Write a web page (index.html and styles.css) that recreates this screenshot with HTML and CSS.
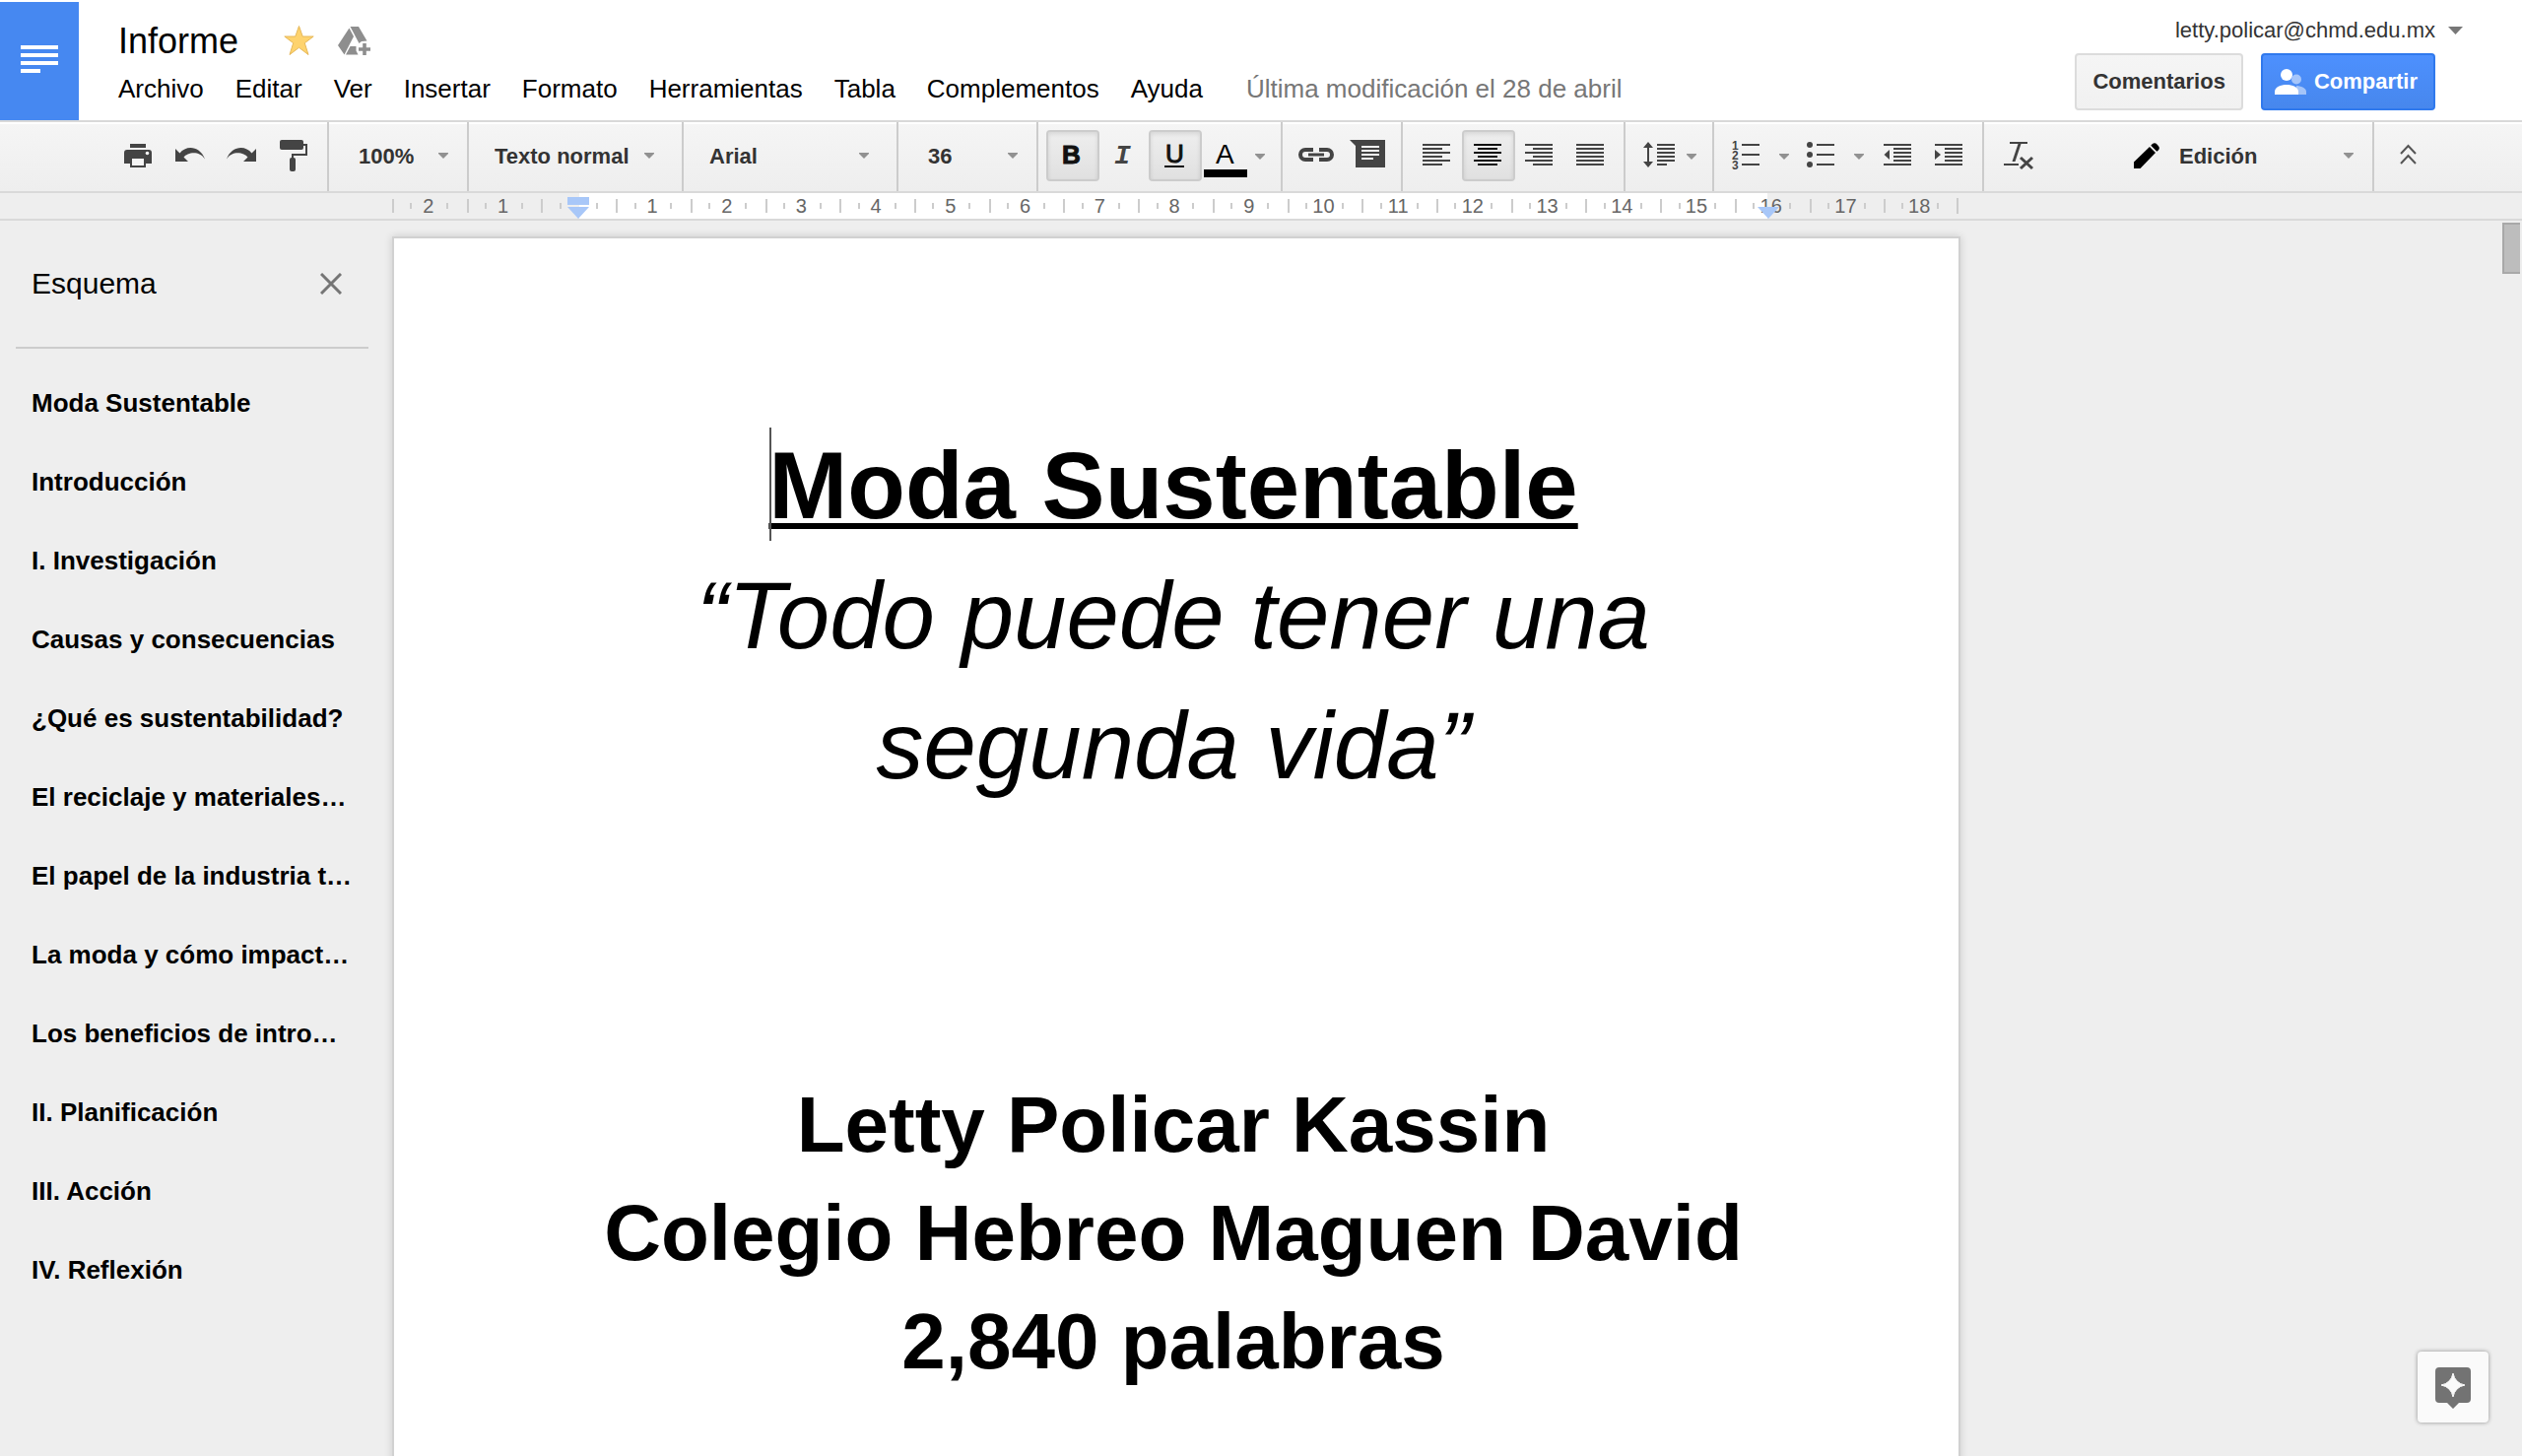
FILE: index.html
```html
<!DOCTYPE html>
<html lang="es">
<head>
<meta charset="utf-8">
<title>Informe - Documentos</title>
<link rel="stylesheet" href="styles.css">
</head>
<body>
<div class="app">
  <header class="header">
    <a class="logo" href="#" aria-label="Página principal de Documentos">
      <svg width="38" height="28" viewBox="0 0 38 28" fill="#fff"><path d="M0 0h38v4H0zM0 8h38v4H0zM0 16h38v4H0zM0 24h20v4H0z"/></svg>
    </a>
    <div class="header-main">
      <div class="title-row">
        <input class="doc-title" type="text" value="Informe" aria-label="Nombre del documento">
        <button class="icon-button" aria-label="Destacar">
          <svg width="31" height="32" viewBox="0 0 31 32"><path d="M15.500 1.500 19.200 12H30.200L21.300 18.700 25 30.500 15.500 23.300 6 30.500 9.700 18.700.8 12H11.800Z" fill="#fed36e" stroke="#e6b85a" stroke-width="1"/></svg>
        </button>
        <button class="icon-button" aria-label="Agregar a Mi unidad">
          <svg width="33" height="29" viewBox="0 0 33 29" fill="#8e8e8e"><path d="M11.500 1.500 16 10 6.500 28.500 0 19Z"/><path d="M12.500 0H21L29.500 14.500 24 15 21.500 17Z"/><path d="M12.500 20H18.500V24.500L20.500 28.500H8Z"/><path d="M25.200 17h3.600v4.200H33v3.600h-4.200V29h-3.600v-4.200H21v-3.600h4.200z"/></svg>
        </button>
      </div>
      <nav class="menu" aria-label="Menú">
        <button>Archivo</button>
        <button>Editar</button>
        <button>Ver</button>
        <button>Insertar</button>
        <button>Formato</button>
        <button>Herramientas</button>
        <button>Tabla</button>
        <button>Complementos</button>
        <button>Ayuda</button>
        <a class="last-edit" href="#">Última modificación el 28 de abril</a>
      </nav>
    </div>
    <div class="header-side">
      <button class="account">letty.policar@chmd.edu.mx
        <svg width="15" height="8" viewBox="0 0 15 8" fill="#777"><path d="M0 0H15L7.500 8Z"/></svg>
      </button>
      <div class="actions">
        <button class="button">Comentarios</button>
        <button class="button button-primary">
          <svg width="32" height="26" viewBox="0 0 32 26" fill="#fff"><g opacity=".5"><circle cx="22" cy="10.500" r="5"/><path d="M22 17C28 17.500 32 20 32 23V26H22Z"/></g><circle cx="12" cy="6" r="6"/><path d="M0 26V23C0 18.500 6 16 12 16S24 18.500 24 23V26Z"/></svg>
          Compartir
        </button>
      </div>
    </div>
  </header>

  <div class="toolbar" role="toolbar">
    <div class="group group-first">
      <button class="tool" aria-label="Imprimir"><svg viewBox="0 0 50 48"><path d="M18 12H34V16H18ZM15 18H37Q40 18 40 21V32H12V21Q12 18 15 18Z"/><path d="M18 26H34V36H18Z"/><path d="M20 27H32V34H20Z" fill="#f5f5f5"/><circle cx="35.500" cy="21.500" r="1.800" fill="#f5f5f5"/></svg></button>
      <button class="tool" aria-label="Deshacer"><svg viewBox="0 0 50 48"><path d="M12 17V30H25L20.500 25.500C24 21 36 18 42 27.500C37 14 23 13 16.500 21.500Z"/></svg></button>
      <button class="tool" aria-label="Rehacer"><svg viewBox="0 0 50 48"><path d="M42 17V30H29L33.500 25.500C30 21 18 18 12 27.500C17 14 31 13 37.500 21.500Z"/></svg></button>
      <button class="tool" aria-label="Copiar formato"><svg viewBox="0 0 50 48"><rect x="14" y="8" width="24" height="10" rx="2"/><path d="M38 13H41V23H27V28" fill="none" stroke="#444" stroke-width="2"/><rect x="24" y="26" width="6" height="14" rx="2"/></svg></button>
    </div>
    <label class="group picker picker-short" aria-label="Zoom">
      <select><option>100%</option></select>
      <svg class="arrow" viewBox="0 0 10 6"><path d="M0 0H10V1L5 6L0 1Z"/></svg>
    </label>
    <label class="group picker picker-long" aria-label="Estilos">
      <select><option>Texto normal</option></select>
      <svg class="arrow" viewBox="0 0 10 6"><path d="M0 0H10V1L5 6L0 1Z"/></svg>
    </label>
    <label class="group picker picker-long" aria-label="Fuente">
      <select><option>Arial</option></select>
      <svg class="arrow" viewBox="0 0 10 6"><path d="M0 0H10V1L5 6L0 1Z"/></svg>
    </label>
    <label class="group picker picker-short" aria-label="Tamaño de fuente">
      <select><option>36</option></select>
      <svg class="arrow" viewBox="0 0 10 6"><path d="M0 0H10V1L5 6L0 1Z"/></svg>
    </label>
    <div class="group group-text">
      <button class="tool pressed" aria-label="Negrita" aria-pressed="true"><svg viewBox="0 0 50 48"><text class="glyph glyph-bold" x="14" y="32">B</text></svg></button>
      <button class="tool" aria-label="Cursiva"><svg viewBox="0 0 50 48"><text class="glyph glyph-italic" x="15" y="32">I</text></svg></button>
      <button class="tool pressed" aria-label="Subrayado" aria-pressed="true"><svg viewBox="0 0 50 48"><text class="glyph glyph-underline" x="15" y="31">U</text><path d="M14 34H34V36H14Z"/></svg></button>
      <button class="tool tool-color" aria-label="Color del texto"><svg viewBox="0 0 78 48"><text class="glyph glyph-color" x="14" y="32">A</text><path d="M2 38H46V46H2Z" fill="#000"/><path class="drop" d="M54 22H64V23L59 28L54 23Z"/></svg></button>
    </div>
    <div class="group">
      <button class="tool" aria-label="Insertar enlace"><svg viewBox="0 0 50 48"><path d="M21 18H13A5 5 0 0 0 13 28H21M27 18H35A5 5 0 0 1 35 28H27" fill="none" stroke="#444" stroke-width="4"/><path d="M16 21.500H32V24.500H16Z"/></svg></button>
      <button class="tool" aria-label="Agregar comentario"><svg viewBox="0 0 50 48"><path d="M6 8H42V36H12V14Z"/><path d="M18 14H36V16H18ZM18 18H36V20H18ZM18 22H36V24H18ZM18 26H30V28H18Z" fill="#f3f3f3"/></svg></button>
    </div>
    <div class="group">
      <button class="tool" aria-label="Alinear a la izquierda"><svg viewBox="0 0 50 48"><path d="M10 12h28v2H10zM10 16h20v2H10zM10 20h28v2H10zM10 24h20v2H10zM10 28h28v2H10zM10 32h20v2H10z"/></svg></button>
      <button class="tool pressed" aria-label="Centrar" aria-pressed="true"><svg viewBox="0 0 50 48"><path d="M10 12h28v2H10zM14 16h20v2H14zM10 20h28v2H10zM14 24h20v2H14zM10 28h28v2H10zM14 32h20v2H14z"/></svg></button>
      <button class="tool" aria-label="Alinear a la derecha"><svg viewBox="0 0 50 48"><path d="M10 12h28v2H10zM18 16h20v2H18zM10 20h28v2H10zM18 24h20v2H18zM10 28h28v2H10zM18 32h20v2H18z"/></svg></button>
      <button class="tool" aria-label="Justificar"><svg viewBox="0 0 50 48"><path d="M10 12h28v2H10zM10 16h28v2H10zM10 20h28v2H10zM10 24h28v2H10zM10 28h28v2H10zM10 32h28v2H10z"/></svg></button>
    </div>
    <div class="group">
      <button class="tool tool-spacing" aria-label="Interlineado"><svg viewBox="0 0 70 48"><path d="M13 10L18 16H14V30H18L13 36L8 30H12V16H8Z"/><path d="M22 12h18v2H22zM22 16h18v2H22zM22 20h18v2H22zM22 24h18v2H22zM22 28h18v2H22zM22 32h10v2H22z"/><path class="drop" d="M52 22H62V23L57 28L52 23Z"/></svg></button>
    </div>
    <div class="group">
      <button class="tool tool-list" aria-label="Lista numerada"><svg viewBox="0 0 74 48"><text class="digit" x="8" y="18">1</text><text class="digit" x="8" y="28">2</text><text class="digit" x="8" y="38">3</text><path d="M18 12h18v2H18zM18 22h18v2H18zM18 32h18v2H18z"/><path class="drop" d="M56 22H66V23L61 28L56 23Z"/></svg></button>
      <button class="tool tool-list" aria-label="Lista con viñetas"><svg viewBox="0 0 74 48"><circle cx="11" cy="13" r="3"/><circle cx="11" cy="23" r="3"/><circle cx="11" cy="33" r="3"/><path d="M18 12h18v2H18zM18 22h18v2H18zM18 32h18v2H18z"/><path class="drop" d="M56 22H66V23L61 28L56 23Z"/></svg></button>
      <button class="tool" aria-label="Reducir sangría"><svg viewBox="0 0 50 48"><path d="M10 12h28v2H10zM20 16h18v2H20zM20 20h18v2H20zM20 24h18v2H20zM20 28h18v2H20zM10 32h28v2H10z"/><path d="M16 18V28L10.500 23Z"/></svg></button>
      <button class="tool" aria-label="Aumentar sangría"><svg viewBox="0 0 50 48"><path d="M10 12h28v2H10zM20 16h18v2H20zM20 20h18v2H20zM20 24h18v2H20zM20 28h18v2H20zM10 32h28v2H10z"/><path d="M10 18V28L16 23Z"/></svg></button>
    </div>
    <div class="group group-open">
      <button class="tool" aria-label="Borrar formato"><svg viewBox="0 0 50 48"><path d="M16 10H34V12H27.500L21.500 30H18.500L24.500 12H16ZM10 32H25V34H10Z"/><path d="M27 26L39 37M39 26L27 37" stroke="#444" stroke-width="3"/></svg></button>
    </div>
    <label class="group picker picker-mode" aria-label="Modo">
      <svg class="pencil" viewBox="0 0 26 26"><path d="M0 19.500 16 4 22 10 6.500 26H0Z"/><path d="M17.300 2.800C19-.3 21.800-.5 23.500 1.500L25 3.300C26.500 5 26 7 23.300 8.800Z"/></svg>
      <select><option>Edición</option></select>
      <svg class="arrow" viewBox="0 0 10 6"><path d="M0 0H10V1L5 6L0 1Z"/></svg>
    </label>
    <div class="group group-last">
      <button class="tool" aria-label="Ocultar los menús"><svg viewBox="0 0 50 48"><path d="M17 22 24.500 14 32 22M17 32 24.500 24 32 32" fill="none" stroke="#555" stroke-width="2"/></svg></button>
    </div>
  </div>

  <div class="ruler">
    <div class="ruler-scale">
      <span>2</span><span>1</span><span></span><span>1</span><span>2</span><span>3</span><span>4</span><span>5</span><span>6</span><span>7</span><span>8</span><span>9</span><span>10</span><span>11</span><span>12</span><span>13</span><span>14</span><span>15</span><span>16</span><span>17</span><span>18</span>
      <svg class="marker marker-left" viewBox="0 0 22 22"><path d="M0 0H22V8H0ZM0 10H22L11 22Z"/></svg>
      <svg class="marker marker-right" viewBox="0 0 22 22"><path d="M0 10H22L11 22Z"/></svg>
    </div>
  </div>

  <main class="workspace">
    <aside class="outline">
      <div class="outline-head">
        <h2>Esquema</h2>
        <button class="icon-button" aria-label="Cerrar esquema"><svg width="22" height="22" viewBox="0 0 22 22"><path d="M1 1 21 21M21 1 1 21" stroke="#757575" stroke-width="3"/></svg></button>
      </div>
      <ul>
        <li><a href="#moda">Moda Sustentable</a></li>
        <li><a href="#">Introducción</a></li>
        <li><a href="#">I. Investigación</a></li>
        <li><a href="#">Causas y consecuencias</a></li>
        <li><a href="#">¿Qué es sustentabilidad?</a></li>
        <li><a href="#">El reciclaje y materiales…</a></li>
        <li><a href="#">El papel de la industria t…</a></li>
        <li><a href="#">La moda y cómo impact…</a></li>
        <li><a href="#">Los beneficios de intro…</a></li>
        <li><a href="#">II. Planificación</a></li>
        <li><a href="#">III. Acción</a></li>
        <li><a href="#">IV. Reflexión</a></li>
      </ul>
    </aside>
    <article class="page">
      <h1 id="moda"><span class="underlined">Moda Sustentable<i class="caret"></i></span></h1>
      <p class="subtitle">“Todo puede tener una segunda vida”</p>
      <div class="credits">
        <p>Letty Policar Kassin</p>
        <p>Colegio Hebreo Maguen David</p>
        <p>2,840 palabras</p>
      </div>
    </article>
    <div class="scroll-thumb"></div>
    <button class="explore" aria-label="Explorar">
      <svg width="36" height="42" viewBox="0 0 36 42"><path d="M4 0H32Q36 0 36 4V32Q36 36 32 36H24L18 42L12 36H4Q0 36 0 32V4Q0 0 4 0Z" fill="#737373"/><path d="M18 6Q20 16 30 18Q20 20 18 30Q16 20 6 18Q16 16 18 6Z" fill="#fafafa" stroke="#fafafa"/></svg>
    </button>
  </main>
</div>
</body>
</html>
```
FILE: styles.css
```css
* {
  box-sizing: border-box;
}

body {
  margin: 0;
  background: #eee;
  color: #000;
  font-family: "Liberation Sans", Arial, sans-serif;
}

h1, h2, p, ul {
  margin: 0;
  padding: 0;
}

button, select, input {
  margin: 0;
  padding: 0;
  border: 0;
  background: none;
  color: inherit;
  font: inherit;
}

a {
  color: inherit;
  text-decoration: none;
}

svg {
  display: block;
  flex: none;
}

.app {
  display: flex;
  flex-direction: column;
  height: 100vh;
  overflow: hidden;
}

/* Header */
.header {
  display: flex;
  flex: none;
  padding-top: 2px;
  background: #fff;
}

.logo {
  display: flex;
  flex: none;
  align-items: center;
  justify-content: center;
  width: 80px;
  height: 120px;
  padding-bottom: 4px;
  background: #4688f1;
}

.header-main {
  display: flex;
  flex: 1;
  flex-direction: column;
  gap: 13px;
  padding: 18px 0 0 40px;
}

.title-row {
  display: flex;
  align-items: center;
  gap: 24px;
  height: 42px;
}

.doc-title {
  width: 144px;
  height: 42px;
  padding-top: 2px;
  font-size: 36px;
}

.icon-button {
  display: flex;
}

.menu {
  display: flex;
  gap: 32px;
  font-size: 26px;
  line-height: 30px;
  white-space: nowrap;
}

.last-edit {
  margin-left: 12px;
  color: #777;
}

.header-side {
  display: flex;
  flex-direction: column;
  align-items: flex-end;
  gap: 11px;
  padding: 17px 60px 0 0;
}

.account {
  display: flex;
  align-items: center;
  gap: 13px;
  color: #333;
  font-size: 22px;
  line-height: 24px;
}

.actions {
  display: flex;
  gap: 18px;
  margin-right: 28px;
}

.button {
  display: flex;
  align-items: center;
  gap: 8px;
  height: 58px;
  padding: 0 16px;
  border: 2px solid #dcdcdc;
  border-radius: 4px;
  background: linear-gradient(#f5f5f5, #f1f1f1);
  color: #333;
  font-size: 22px;
  font-weight: bold;
}

.button-primary {
  padding-left: 12px;
  border-color: #3079ed;
  background: linear-gradient(#4d90fe, #4787ed);
  color: #fff;
}

/* Toolbar */
.toolbar {
  display: flex;
  flex: none;
  height: 74px;
  border-top: 2px solid #d9d9d9;
  border-bottom: 2px solid #d9d9d9;
  background: linear-gradient(#fff 2px, #f5f5f5 2px, #eee);
}

.group {
  display: flex;
  flex: none;
  align-items: center;
  padding: 0 6px 2px 8px;
  border-right: 2px solid #ccc;
}

.group-first {
  padding-left: 112px;
  padding-right: 10px;
}

.group-text {
  padding-right: 0;
}

.group-open {
  border-right: 0;
}

.group-last {
  width: 150px;
  border-right: 0;
}

.tool {
  flex: none;
  width: 54px;
  height: 52px;
  border: 2px solid transparent;
  border-radius: 4px;
}

.tool + .tool {
  margin-left: -2px;
}

.tool svg {
  width: 100%;
  height: 48px;
  fill: #444;
}

.tool .drop,
.arrow {
  fill: #919191;
}

.tool.pressed {
  border-color: #ccc;
  background: linear-gradient(#eee, #e0e0e0);
  box-shadow: inset 0 2px 4px rgba(0, 0, 0, 0.1);
}

.tool.pressed svg {
  fill: #111;
}

.tool-color {
  width: 82px;
}

.tool-spacing {
  width: 74px;
}

.tool-list {
  width: 78px;
}

.glyph {
  font-size: 26px;
}

.glyph-bold {
  font-weight: bold;
  stroke: #111;
}

.glyph-italic {
  font-family: "Liberation Mono", "Courier New", monospace;
  font-size: 28px;
  font-style: italic;
  font-weight: bold;
}

.glyph-underline {
  stroke: #111;
}

.glyph-color {
  fill: #000;
  font-size: 28px;
}

.digit {
  font-size: 12px;
  font-weight: bold;
}

.picker {
  padding: 0 0 2px;
  color: #333;
  font-size: 22px;
  font-weight: bold;
}

.picker select {
  flex: 1;
  min-width: 0;
  appearance: none;
}

.arrow {
  width: 10px;
  height: 6px;
}

.picker-short {
  width: 142px;
  padding-left: 30px;
  padding-right: 19px;
}

.picker-long {
  width: 218px;
  padding-left: 26px;
  padding-right: 28px;
}

.picker-mode {
  width: 244px;
  margin-left: auto;
  padding-right: 19px;
}

.pencil {
  width: 26px;
  height: 26px;
  margin-right: 20px;
}

/* Ruler */
.ruler {
  flex: none;
  height: 28px;
  padding-left: 398px;
  border-bottom: 2px solid #d9d9d9;
}

.ruler-scale {
  position: relative;
  display: grid;
  grid-template-columns: repeat(21, 1fr);
  width: 1590px;
  height: 26px;
  background: linear-gradient(90deg, #eee 190px, #fff 190px, #fff 1396px, #eee 1396px);
  color: #666;
  font-size: 20px;
  line-height: 26px;
  text-align: center;
}

.ruler-scale span {
  padding-right: 2px;
  background:
    linear-gradient(#ccc, #ccc) left center / 2px 14px no-repeat,
    linear-gradient(#ccc, #ccc) 25% center / 2px 6px no-repeat,
    linear-gradient(#ccc, #ccc) 75% center / 2px 6px no-repeat;
}

.ruler-scale span:last-of-type {
  border-right: 2px solid;
  border-image: linear-gradient(transparent 6px, #ccc 6px, #ccc 20px, transparent 20px) 1;
}

.marker {
  position: absolute;
  top: 4px;
  width: 22px;
  height: 22px;
  fill: #a8c7f8;
}

.marker-left {
  left: 178px;
}

.marker-right {
  left: 1386px;
}

/* Document area */
.workspace {
  position: relative;
  display: flex;
  flex: 1;
  align-items: flex-start;
  min-height: 0;
  overflow: hidden;
}

.outline {
  flex: none;
  width: 398px;
}

.outline-head {
  display: flex;
  align-items: center;
  justify-content: space-between;
  height: 130px;
  margin: 0 24px 15px 16px;
  padding: 0 27px 0 16px;
  border-bottom: 2px solid #ccc;
}

.outline h2 {
  font-size: 30px;
  font-weight: normal;
}

.outline li {
  padding-left: 32px;
  font-size: 26px;
  font-weight: bold;
  line-height: 80px;
  list-style: none;
  white-space: nowrap;
}

.page {
  flex: none;
  width: 1592px;
  min-height: 2246px;
  margin-top: 16px;
  padding: 185px 194px 185px 188px;
  border: 2px solid #d1d1d1;
  background: #fff;
  box-shadow: 0 0 8px rgba(0, 0, 0, 0.15);
  text-align: center;
}

.page h1,
.subtitle {
  font-size: 96px;
  line-height: 132px;
}

.underlined {
  position: relative;
  text-decoration: underline 6px;
  text-decoration-skip-ink: none;
  text-underline-offset: 5px;
}

.caret {
  position: absolute;
  top: -5px;
  left: 1px;
  width: 2px;
  height: 115px;
  background: #555;
}

.subtitle {
  font-style: italic;
}

.credits {
  margin-top: 264px;
  font-size: 80px;
  font-weight: bold;
  line-height: 110px;
}

.scroll-thumb {
  position: absolute;
  top: 2px;
  right: 2px;
  width: 18px;
  height: 52px;
  border: 2px solid #a8a8a8;
  border-right: 0;
  background: #bdbdbd;
}

.explore {
  position: absolute;
  right: 34px;
  bottom: 34px;
  display: flex;
  align-items: center;
  justify-content: center;
  width: 72px;
  height: 72px;
  padding-top: 2px;
  border-radius: 4px;
  background: #fafafa;
  box-shadow: 0 0 4px rgba(0, 0, 0, 0.4);
}
```
